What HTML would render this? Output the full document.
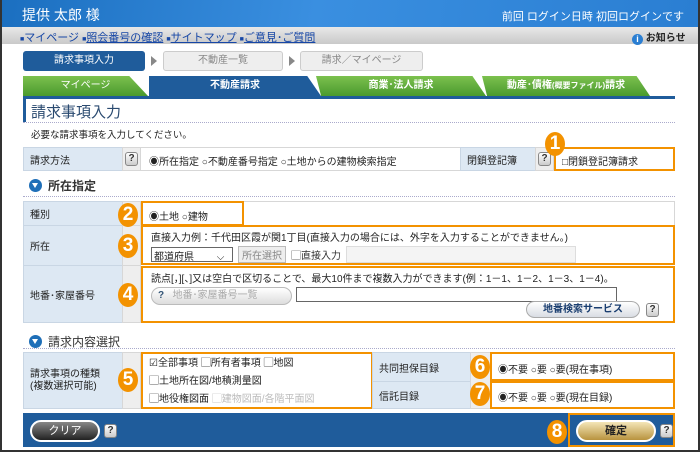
<!DOCTYPE html>
<html><head><meta charset="utf-8"><style>
*{margin:0;padding:0;box-sizing:border-box}
body{width:700px;height:452px;overflow:hidden;background:#fff;font-family:"Liberation Sans","Noto Sans CJK JP",sans-serif;font-size:10px;color:#222;position:relative}
.a{position:absolute}
.lab{background:#dde8f3;border:1px solid #c9d6e4;padding-left:6px;display:flex;align-items:center}
.gap{background:#eee;border:1px solid #d7d7d7}
.cell{border:1px solid #d7d7d7;background:#fff}
.ob{border:2px solid #f39200}
.bd{position:absolute;width:20px;height:24px;border-radius:50%;background:#f39200;color:#fff;font-size:19px;font-weight:bold;text-align:center;line-height:24px}
.q{display:inline-block;width:13px;height:14px;border:1px solid #888;border-radius:3px;background:linear-gradient(#fff,#ccc);font-size:10px;line-height:12px;text-align:center;color:#333;font-weight:bold}
.hd{font-size:12px;font-weight:bold;color:#333}
.ic{display:inline-block;width:13px;height:13px;border-radius:50%;background:#1f6fb8;vertical-align:-2px;margin-right:6px;position:relative}
.ic:after{content:"";position:absolute;left:3px;top:4px;border-left:3.5px solid transparent;border-right:3.5px solid transparent;border-top:5px solid #fff}
.dot{border-top:1px dotted #aac;height:0}
.tab{position:absolute;top:76px;height:20px;color:#fff;font-size:10px;text-align:center;line-height:20px}
</style></head><body>
<div class="a" style="left:0;top:0;width:700px;height:452px;border:2px solid #333;border-top:0"></div>
<div class="a" style="left:2px;top:0;width:696px;height:27px;background:linear-gradient(100deg,#1b6fc0,#3a8fe0 45%,#2a7ed2)"></div>
<div class="a" style="left:22px;top:5px;color:#fff;font-size:14px">提供 太郎 様</div>
<div class="a" style="right:16px;top:8px;color:#fff;font-size:11px">前回 ログイン日時 初回ログインです</div>
<div class="a" style="left:2px;top:27px;width:696px;height:17px;background:linear-gradient(#e8e8e8,#c9c9c9)"></div>
<div class="a" style="left:20px;top:29px;font-size:11px;color:#1747a6"><span style="font-size:7px">■</span>マイページ <span style="font-size:7px">■</span><u>照会番号の確認</u> <span style="font-size:7px">■</span><u>サイトマップ</u> <span style="font-size:7px">■</span><u>ご意見･ご質問</u></div>
<div class="a" style="left:632px;top:29px;font-size:10px;font-weight:bold"><span style="display:inline-block;width:11px;height:11px;border-radius:50%;background:#2a7ed2;color:#fff;text-align:center;line-height:11px;font-size:9px;vertical-align:-1px">i</span> お知らせ</div>

<div class="a" style="left:23px;top:51px;width:122px;height:20px;background:#1f5c9b;border-radius:3px;color:#fff;text-align:center;line-height:20px;font-size:10px">請求事項入力</div>
<div class="a" style="left:151px;top:56px;border-left:6px solid #888;border-top:5px solid transparent;border-bottom:5px solid transparent"></div>
<div class="a" style="left:163px;top:51px;width:120px;height:20px;background:#eee;border:1px solid #ccc;border-radius:3px;color:#888;text-align:center;line-height:18px;font-size:10px">不動産一覧</div>
<div class="a" style="left:289px;top:56px;border-left:6px solid #888;border-top:5px solid transparent;border-bottom:5px solid transparent"></div>
<div class="a" style="left:300px;top:51px;width:123px;height:20px;background:#eee;border:1px solid #ccc;border-radius:3px;color:#888;text-align:center;line-height:18px;font-size:10px">請求／マイページ</div>

<div class="tab" style="left:23px;width:125px;background:linear-gradient(#7cc14e,#4a9a2e);clip-path:polygon(0 0,85% 0,100% 100%,0 100%)">マイページ</div>
<div class="tab" style="left:149px;width:172px;background:#1f5c9b;clip-path:polygon(0 0,92% 0,100% 100%,0 100%);font-weight:bold">不動産請求</div>
<div class="tab" style="left:316px;width:170px;background:linear-gradient(#7cc14e,#4a9a2e);clip-path:polygon(0 0,92% 0,100% 100%,3% 100%);font-weight:bold">商業･法人請求</div>
<div class="tab" style="left:482px;width:168px;background:linear-gradient(#7cc14e,#4a9a2e);clip-path:polygon(0 0,92% 0,100% 100%,3% 100%);font-weight:bold">動産･債権<span style="font-size:8px">(概要ファイル)</span>請求</div>
<div class="a" style="left:23px;top:96px;width:652px;height:3px;background:#1f5c9b"></div>
<div class="a" style="left:23px;top:99px;width:3px;height:23px;background:#1f5c9b"></div>
<div class="a" style="left:31px;top:101px;font-size:15px;color:#2a4a70">請求事項入力</div>
<div class="a dot" style="left:23px;top:122px;width:652px"></div>
<div class="a" style="left:31px;top:127px;font-size:9.5px">必要な請求事項を入力してください。</div>

<div class="a lab" style="left:23px;top:147px;width:100px;height:24px">請求方法</div>
<div class="a gap" style="left:122px;top:147px;width:19px;height:24px;padding:4px 2px"><span class="q">?</span></div>
<div class="a cell" style="left:140px;top:147px;width:321px;height:24px;padding:5px 8px">◉所在指定 ○不動産番号指定 ○土地からの建物検索指定</div>
<div class="a lab" style="left:460px;top:147px;width:76px;height:24px">閉鎖登記簿</div>
<div class="a gap" style="left:535px;top:147px;width:19px;height:24px;padding:4px 2px"><span class="q">?</span></div>
<div class="a ob" style="left:554px;top:147px;width:121px;height:24px;padding:4px 6px">□閉鎖登記簿請求</div>
<div class="bd" style="left:545px;top:132px">1</div>

<div class="a hd" style="left:29px;top:177px"><span class="ic"></span>所在指定</div>
<div class="a dot" style="left:23px;top:196px;width:652px"></div>

<div class="a lab" style="left:23px;top:201px;width:100px;height:25px">種別</div>
<div class="a gap" style="left:122px;top:201px;width:19px;height:25px"></div>
<div class="a cell" style="left:140px;top:201px;width:535px;height:25px"></div>
<div class="a ob" style="left:141px;top:201px;width:103px;height:25px;padding:5px 6px">◉土地 ○建物</div>
<div class="lab a" style="left:23px;top:225px;width:100px;height:41px">所在</div>
<div class="a gap" style="left:122px;top:225px;width:19px;height:41px"></div>
<div class="a ob" style="left:141px;top:225px;width:534px;height:40px;padding:2px 8px">直接入力例：千代田区霞が関1丁目(直接入力の場合には、外字を入力することができません。)
<div style="margin-top:2px;display:flex;gap:5px;align-items:center"><span style="border:1px solid #666;width:82px;height:15px;font-size:10px;padding-left:2px">都道府県　　 ⌵</span><span style="border:1px solid #bbb;background:#eee;color:#888;padding:0 3px;font-size:10px">所在選択</span><span style="color:#333">▢直接入力</span><span style="border:1px solid #ddd;background:#f4f4f4;width:230px;height:17px"></span></div></div>
<div class="lab a" style="left:23px;top:265px;width:100px;height:58px">地番･家屋番号</div>
<div class="a gap" style="left:122px;top:265px;width:19px;height:58px"></div>
<div class="a ob" style="left:141px;top:266px;width:534px;height:57px;padding:2px 8px">読点[，][、]又は空白で区切ることで、最大10件まで複数入力ができます(例：1－1、1－2、1－3、1－4)。
<div style="margin-top:2px;display:flex;gap:4px"><span style="border:1px solid #bbb;border-radius:9px;background:linear-gradient(#fff,#ddd);width:141px;height:18px;color:#aaa;font-size:10px;padding-left:6px;line-height:16px"><b style="color:#357">?</b>&nbsp;&nbsp; 地番･家屋番号一覧</span><span style="border:1px solid #666;width:321px;height:15px"></span></div>
<div style="position:absolute;right:14px;top:33px;display:flex;gap:6px;align-items:center"><span style="border:1px solid #aaa;border-radius:9px;background:linear-gradient(#fff,#d9dde3);width:114px;height:17px;text-align:center;font-weight:bold;color:#1a3e70;font-size:10px;line-height:15px">地番検索サービス</span><span class="q">?</span></div></div>
<div class="bd" style="left:118px;top:203px">2</div>
<div class="bd" style="left:118px;top:234px">3</div>
<div class="bd" style="left:118px;top:283px">4</div>

<div class="a hd" style="left:29px;top:333px"><span class="ic"></span><span style="font-weight:normal">請求内容選択</span></div>
<div class="a dot" style="left:23px;top:348px;width:652px"></div>

<div class="a lab" style="left:23px;top:352px;width:100px;height:57px;line-height:12px">請求事項の種類<br>(複数選択可能)</div>
<div class="a gap" style="left:122px;top:352px;width:19px;height:57px"></div>
<div class="a ob" style="left:141px;top:352px;width:232px;height:57px;padding:1px 6px;line-height:18px">☑全部事項 ▢所有者事項 ▢地図<br>▢土地所在図/地積測量図<br>▢地役権図面 <span style="color:#bbb">▢建物図面/各階平面図</span></div>
<div class="a lab" style="left:372px;top:352px;width:99px;height:30px">共同担保目録</div>
<div class="a lab" style="left:372px;top:381px;width:99px;height:28px">信託目録</div>
<div class="a gap" style="left:470px;top:352px;width:21px;height:57px"></div>
<div class="a ob" style="left:490px;top:352px;width:185px;height:29px;padding:7px 6px">◉不要 ○要 ○要(現在事項)</div>
<div class="a ob" style="left:490px;top:381px;width:185px;height:28px;padding:6px 6px">◉不要 ○要 ○要(現在目録)</div>
<div class="bd" style="left:118px;top:368px">5</div>
<div class="bd" style="left:470px;top:355px">6</div>
<div class="bd" style="left:470px;top:382px">7</div>

<div class="a" style="left:23px;top:413px;width:652px;height:34px;background:#1f5c9b"></div>
<div class="a" style="left:30px;top:420px;width:70px;height:22px;border:2px solid #fff;border-radius:11px;background:linear-gradient(#888,#222);color:#fff;text-align:center;line-height:18px;font-size:11px">クリア</div>
<div class="a q" style="left:104px;top:424px">?</div>
<div class="a ob" style="left:568px;top:413px;width:107px;height:34px"></div>
<div class="a" style="left:576px;top:420px;width:80px;height:22px;border:2px solid #fff;border-radius:11px;background:linear-gradient(#f4e6b8,#b8933e);color:#222;text-align:center;line-height:18px;font-weight:bold;font-size:11px">確定</div>
<div class="a q" style="left:660px;top:424px">?</div>
<div class="bd" style="left:547px;top:420px">8</div>
</body></html>
